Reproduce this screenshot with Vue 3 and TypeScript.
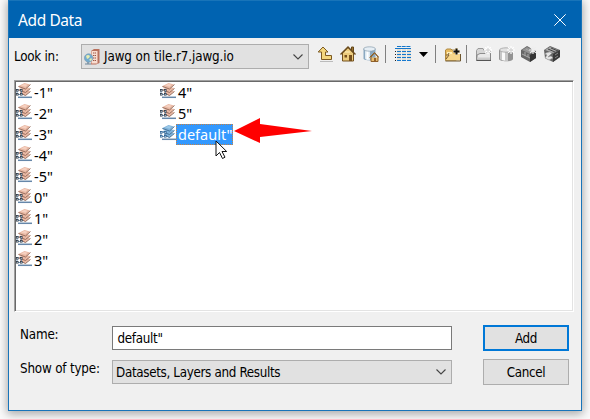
<script setup lang="ts">
import { ref } from 'vue'

interface LayerItem {
  id: number
  label: string
}

const columns: LayerItem[][] = [
  ['-1"', '-2"', '-3"', '-4"', '-5"', '0"', '1"', '2"', '3"'].map((label, id) => ({ id, label })),
  ['4"', '5"', 'default"'].map((label, i) => ({ id: i + 9, label })),
]
const selected = ref<number>(11)
const name = ref<string>(' default"')
</script>

<template>
  <div class="desktop">
    <section class="dialog">
      <header class="titlebar">
        <h1>Add Data</h1>
        <svg class="close" viewBox="0 0 12 12"><path d="M.3.3 11.7 11.7M11.7.3.3 11.7" /></svg>
      </header>

      <div class="lookbar">
        <span class="look-label">Look in:</span>
        <div class="combo location">
          <svg class="server" viewBox="0 0 16 16">
            <path d="M7 2 10 0h5.500v14L12 15.500H7z" fill="#b9705c" />
            <path d="M7.500 2h6v12.500h-6z" fill="#f8ddd0" />
            <path d="M9 4h3M9 6.500h3M9 9h3M9 11.500h3" stroke="#9a5546" stroke-dasharray="1.300 .5" />
            <circle cx="4.600" cy="9" r="4.200" fill="#72abd0" stroke="#7f9fb5" stroke-width=".7" />
            <path d="M2 7q2-2 4 0L5 9 3 10zM5 11l2-2 1 1-1 2z" fill="#e6edb0" />
            <path d="M1 15h6M4 13v2" stroke="#6e879b" stroke-width="1.200" />
          </svg>
          <span class="location-text">Jawg on tile.r7.jawg.io</span>
          <svg class="chevron" viewBox="0 0 10 6"><path d="M.5.500 5 5 9.500.5" /></svg>
        </div>
        <nav class="tools">
          <svg class="icon up" viewBox="0 0 16 16">
            <path d="M3 15.500h13" stroke="#bbb" />
            <path d="M6 1 1.200 6H4.500v7.500h10v-4h-6V6h2.500z" fill="#f4d77e" stroke="#7c5a22" />
          </svg>
          <svg class="icon home" viewBox="0 0 16 16">
            <path d="M11.500 1h2v5h-2z" fill="#9c7434" stroke="#654818" />
            <path d="M2.500 7 8 1.500 13.500 7v8h-11z" fill="#eccb7c" stroke="#72501f" />
            <path d="M.5 8.500 8 1l7.500 7.500" fill="none" stroke="#694a1d" stroke-width="1.400" />
            <path d="M4.500 9H7v2.500H4.500zM9 9h3v6H9z" fill="#76501c" />
            <path d="M5 6h5" stroke="#fff0ba" />
          </svg>
          <svg class="icon data-home" viewBox="0 0 16 16">
            <path d="M.5 3v9.500c0 2.500 12 2.500 12 0V3z" fill="#8ba9c1" />
            <path d="M2 4h5v10q-4 0-5-1.500z" fill="#dce8f0" />
            <path d="M3.500 4h2v9.500h-2z" fill="#fff" />
            <ellipse cx="6.500" cy="3" rx="6" ry="2.200" fill="#e6eef4" stroke="#879cac" stroke-width=".7" />
            <path d="m6.500 11.500 5-5 4.500 5M8 11v4.500h7V11l-3.500-4z" fill="#e8bd6e" stroke="#8e6029" />
            <path d="M11 12h2v3.500h-2z" fill="#925f2b" />
          </svg>
          <i class="rule"></i>
          <svg class="icon grid" viewBox="0 0 16 16">
            <path d="M2 .5h14" stroke="#1476ca" stroke-dasharray="4 .7" />
            <path d="M0 2.500h16" stroke="#1476ca" />
            <path d="M2 5.500h14M2 8.500h14M2 11.500h14M2 14.500h14" stroke="#1679cf" stroke-dasharray="4 1" />
            <path d="M2 4h14M2 7h14M2 10h14M2 13h14" stroke="#c9bd9a" stroke-width=".6" stroke-dasharray="4 1" />
            <path d="M.5 5v11" stroke="#222" stroke-dasharray="1 2" />
          </svg>
          <svg class="caret" viewBox="0 0 9 5"><path d="M0 0h9L4.500 5z" /></svg>
          <i class="rule"></i>
          <svg class="icon connect" viewBox="0 0 16 16">
            <path d="M.5 14.500V4L2 3h4l1 1h4v10.500z" fill="#e9bd62" stroke="#b08a43" />
            <path d="M2 6h5l1 3-3-1-3 4z" fill="#fff0bc" />
            <path d="M1 14.500 5 8h10.500v6.500z" fill="#f6d68b" />
            <path d="M1 9h2l1-2M1 13l3-4" fill="none" stroke="#76562c" />
            <path d="M.5 15h15V8" fill="none" stroke="#6d552c" />
            <path d="M11.500 2v7M8 5.500h7" stroke="#f4e5bd" stroke-width="3" />
            <path d="M11.500 2.500v6M8.500 5.500h6" stroke="#111" stroke-width="2" />
          </svg>
          <i class="rule"></i>
          <svg class="icon new-folder" viewBox="0 0 16 16">
            <path d="M.5 14.500V4.500L2 2.500h5l1 2h6.500v10z" fill="#d6d6d6" stroke="#999" />
            <path d="M1 14V9l3-1.500h5l1-1.500h4.500v8z" fill="#e8e8e8" stroke="#777" stroke-width=".8" />
            <path d="M1 12.500h13" stroke="#ccc" stroke-width="2" />
            <path d="M.5 14.500h14.500" stroke="#555" />
            <path d="M12 0v8M8 4h8M9.200 1.200l5.600 5.600m0-5.600L9.200 6.800" stroke="#fff" stroke-width="1.300" />
            <path d="M12 2v4M10 4h4" stroke="#ccc" />
          </svg>
          <svg class="icon database" viewBox="0 0 16 16">
            <path d="M0 4v9c0 3 14 3 14 0V4z" fill="#939393" />
            <path d="M1 4h8v11q-7 0-8-2z" fill="#c7c7c7" />
            <path d="M3 5h3v9.500l-3-.5z" fill="#fafafa" />
            <ellipse cx="7" cy="4" rx="6.500" ry="2.200" fill="#e2e2e2" stroke="#999" stroke-width=".7" />
            <path d="M12 0v8M8 4h8M9.200 1.200l5.600 5.600m0-5.600L9.200 6.800" stroke="#fff" stroke-width="1.200" />
            <path d="M12 2v4M10 4h4" stroke="#ccc" />
          </svg>
          <svg class="icon toolbox" viewBox="0 0 16 16">
            <path d="m0 4 6-4 9 5v7l-6 4-9-5z" fill="#666" />
            <path d="m1 4 5-3 8 4-5 3z" fill="#929292" />
            <path d="m1 6 8 4v5l-8-4z" fill="#676767" />
            <path d="m9 9 6-4v7l-6 4z" fill="#363636" />
            <path d="m1 8 8 4m-5-6v4m3-2v3M5 3l5 3" fill="none" stroke="#aaa" />
            <path d="M12 0v8M8 4h8M9.200 1.200l5.600 5.600m0-5.600L9.200 6.800" stroke="#eee" stroke-width="1.200" />
          </svg>
          <svg class="icon toolbox" viewBox="0 0 16 16">
            <path d="m0 4 6-4 10 4v7l-7 5-8-4z" fill="#666" />
            <path d="m1 4 5-3 8 3-5 3z" fill="#aaa" />
            <path d="m9 8 7-4v7l-7 5z" fill="#393939" />
            <path d="m4 3 7 3M7 2l7 3" stroke="#444" />
            <path d="M2 7q4-2 6 0L6 9l-2 2 3-1 2 2-4 2-4-2 2-3-2-1z" fill="#e5e5e5" stroke="#999" stroke-width=".6" />
            <path d="m11 9 3-2m-3 5 3-2" stroke="#888" />
          </svg>
        </nav>
      </div>

      <div class="listing">
        <ul v-for="(column, i) in columns" :key="i">
          <li v-for="item in column" :key="item.id" :class="{ selected: item.id === selected }" @click="selected = item.id">
            <svg class="layer-icon" viewBox="0 0 16 17">
              <path class="base" d="M2 15.300h14" />
              <path class="stack" d="m4 10 5-2 5.500 1-5 4.500L4 12z" />
              <path class="edge" d="m4 11 5.500 2.500 5-4" />
              <path class="stack" d="m3 7 6-2 5.500 1-5 4.500L3 8.500z" />
              <path class="edge" d="m3 8 6.500 2.500 5-4" />
              <path class="stack" d="m2.500 4 6-3L14 2.500 9.500 7l-7-2z" />
              <path class="edge" d="m2.500 4.500 7 2.500 5-4.500" />
              <path class="sheen" d="m5 3.500 3.500-1.700 3 1-2 2z" />
              <path class="network" d="M1 8v5M5.500 8v5M0 8h3M0 12.500h7" />
              <path class="node" d="M0 7h2.500v2.500H0zM4 7h2.500v2.500H4zM0 11h2.500v2.500H0zM4 11h2.500v2.500H4z" />
              <path class="holes" d="M.7 8.300h1M4.700 8.300h1M.7 12.300h1M4.700 12.300h1" />
            </svg>
            <span class="item-label">{{ item.label }}</span>
          </li>
        </ul>
        <svg class="annotation" viewBox="0 0 78 26"><path d="M0 13 26 0v6l52 7-52 6v6z" /></svg>
        <svg class="pointer" viewBox="0 0 13 20"><path d="M1 1v15l3.500-3.500 3 6 2.500-1.300-3-5.700h4.700z" /></svg>
      </div>

      <form class="fields" @submit.prevent>
        <label for="name">Name:</label>
        <input id="name" v-model="name" type="text">
        <button type="submit" class="primary">Add</button>
        <label class="type-label">Show of type:</label>
        <div class="combo type">
          <span class="type-text">Datasets, Layers and Results</span>
          <svg class="chevron" viewBox="0 0 10 6"><path d="M.5.500 5 5 9.500.5" /></svg>
        </div>
        <button type="button">Cancel</button>
      </form>
    </section>
  </div>
</template>

<style>
body {
  background: #fafafa;
  overflow: hidden;
}
</style>

<style scoped>
* {
  box-sizing: border-box;
}
.desktop {
  height: 419px;
  padding: 0 8px 8px;
  font-family: "DejaVu Sans Condensed", "DejaVu Sans", sans-serif;
  font-stretch: condensed;
  font-size: 13.300px;
  color: #000;
}
.dialog {
  width: 574px;
  height: 411px;
  border: 1px solid #1874b9;
  background: #f0f0f0;
  box-shadow: 0 2px 9px 1px #0005;
}
.titlebar {
  height: 37px;
  padding: 0 15px 0 9px;
  display: flex;
  align-items: center;
  justify-content: space-between;
  background: #0063b1;
  color: #fff;
}
h1 {
  margin: 0;
  font: 400 15.500px/24px "Noto Sans", sans-serif;
  letter-spacing: -.4px;
}
.close {
  width: 12px;
  height: 12px;
  fill: none;
  stroke: #fff;
}
.lookbar {
  height: 42px;
  padding: 6px 0 0 5px;
  display: flex;
}
.look-label {
  width: 67px;
  line-height: 25px;
  letter-spacing: -.25px;
}
.combo {
  display: flex;
  align-items: center;
  border: 1px solid #adadad;
  background: #e1e1e1;
  white-space: nowrap;
}
.location {
  width: 228px;
  height: 25px;
  padding: 0 5px 0 2px;
}
.location-text {
  letter-spacing: -.1px;
}
.server {
  width: 16px;
  height: 16px;
  margin-right: 4px;
}
.chevron {
  width: 10px;
  height: 6px;
  margin-left: auto;
  fill: none;
  stroke: #444;
  stroke-width: 1.100;
}
.tools {
  height: 20px;
  margin: 0 0 0 8px;
  display: flex;
  align-items: center;
}
.icon {
  width: 16px;
  height: 16px;
  margin-right: 7px;
}
.data-home {
  margin-right: 6px;
}
.home {
  margin-right: 7px;
}
.rule {
  width: 1px;
  height: 18px;
  margin-right: 9px;
  background: #808080;
}
.grid {
  margin-right: 8px;
}
.caret {
  width: 9px;
  height: 5px;
  margin-right: 7px;
}
.connect {
  margin-right: 5px;
}
.database {
  margin-right: 6px;
}
.listing {
  position: relative;
  width: 560px;
  height: 232px;
  margin-left: 5px;
  display: flex;
  border: 1px solid;
  border-color: #a0a0a0 #fff #fff #a0a0a0;
  background: #fff;
  box-shadow: inset 1px 1px #696969, inset -1px -1px #e3e3e3;
  padding: 1px;
}
ul {
  width: 144px;
  margin: 0;
  padding: 0;
  list-style: none;
}
li {
  height: 21px;
  display: flex;
}
.layer-icon {
  width: 16px;
  height: 17px;
}
.stack {
  fill: #e9b8a3;
}
.edge {
  fill: none;
  stroke: #8d6556;
  stroke-width: .9;
}
.sheen {
  fill: #f5d1c1;
}
.base {
  stroke: #6687a9;
  stroke-width: 1.500;
}
.node {
  fill: #263544;
}
.network {
  fill: none;
  stroke: #7294b3;
}
.holes {
  stroke: #fff;
}
.item-label {
  height: 21px;
  padding: 0 2px;
  font: 400 14.500px/21px "Noto Sans", sans-serif;
}
.selected .item-label {
  width: 57px;
  outline: 1px dotted #c58245;
  outline-offset: -1px;
  background: #3399ff;
  color: #fff;
}
.selected .stack {
  fill: #7fb2da;
}
.selected .sheen {
  fill: #9cc9e8;
}
.selected .edge {
  stroke: #416b8d;
}
.selected .node {
  fill: #245d91;
}
.annotation {
  position: absolute;
  left: 219px;
  top: 37px;
  width: 78px;
  height: 26px;
  fill: #f00;
}
.pointer {
  position: absolute;
  left: 200px;
  top: 59px;
  width: 13px;
  height: 20px;
  fill: #fff;
  stroke: #111;
}
.fields {
  display: grid;
  grid-template-columns: 92px 340px 86px;
  grid-template-rows: 26px 26px;
  row-gap: 8px;
  padding: 13px 0 0 11px;
  align-items: center;
}
label {
  line-height: 16px;
  padding-bottom: 7px;
  white-space: nowrap;
  letter-spacing: -.18px;
}
input {
  width: 340px;
  height: 24px;
  padding: 0 1px;
  border: 1px solid #7a7a7a;
  border-radius: 0;
  outline: 0;
  background: #fff;
  color: #000;
  font: inherit;
  letter-spacing: -.3px;
}
button {
  width: 86px;
  height: 26px;
  margin-left: 31px;
  padding: 0;
  border: 1px solid #adadad;
  border-radius: 0;
  background: #e1e1e1;
  color: #000;
  font: inherit;
  letter-spacing: -.3px;
}
.primary {
  border: 2px solid #0078d7;
}
.type {
  height: 24px;
  padding: 0 5px 0 3px;
}
.type-text {
  letter-spacing: -.33px;
}
</style>
